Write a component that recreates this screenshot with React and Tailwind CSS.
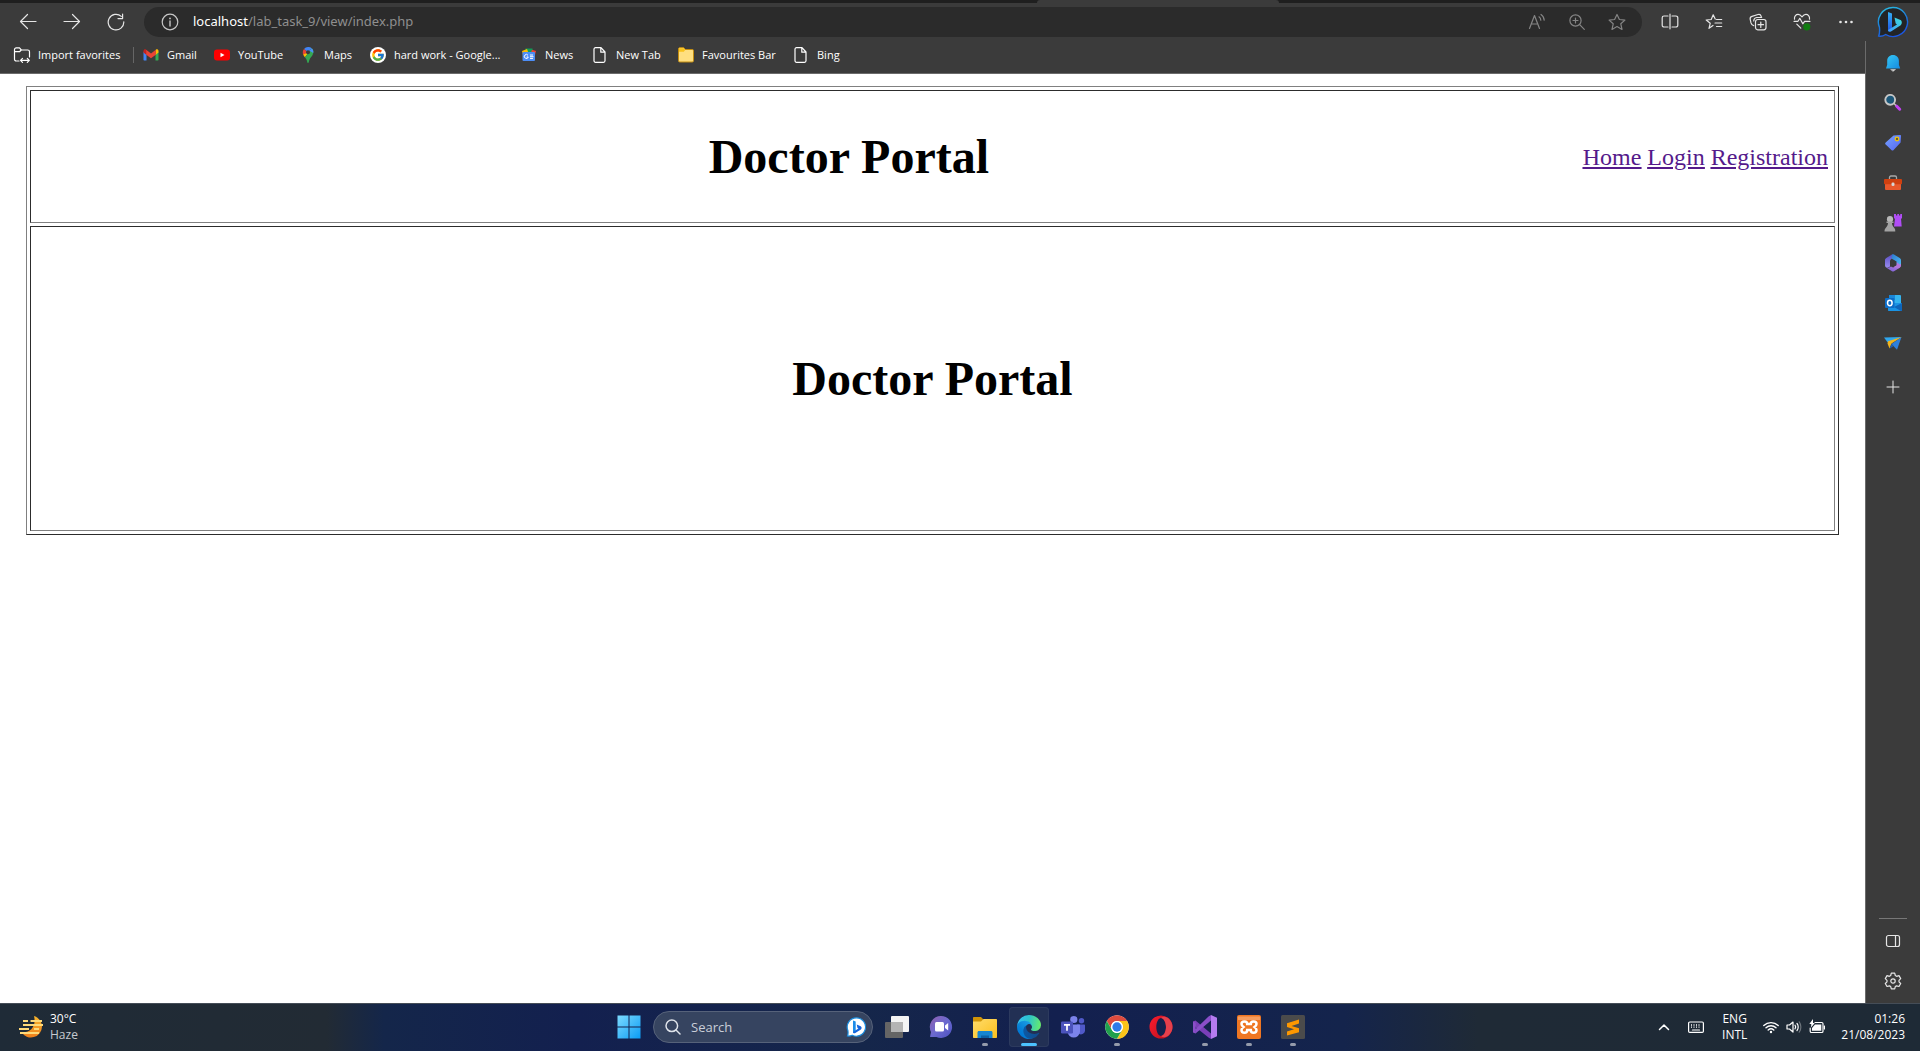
import React from "react";
import { FcGoogle } from "react-icons/fc";

function Icon({ size = 18, box = "0 0 18 18", className = "", width, children }) {
  return (
    <svg
      width={width || size}
      height={size}
      viewBox={box}
      fill="none"
      stroke="currentColor"
      strokeWidth="1.2"
      strokeLinecap="round"
      strokeLinejoin="round"
      className={"shrink-0 " + className}
      aria-hidden="true"
    >
      {children}
    </svg>
  );
}

/* ---------- toolbar icons ---------- */
const ArrowLeft = () => (
  <Icon><path d="M17 8.5H1.5M8.5 1.5l-7 7 7 7" /></Icon>
);
const ArrowRight = () => (
  <Icon><path d="M1 8.5h15.5M9.5 1.5l7 7-7 7" /></Icon>
);
const Reload = () => (
  <Icon><path d="M16.8 8.8A7.8 7.8 0 1 1 14.3 3.4M15.6 1v4.6H11" /></Icon>
);
const InfoIcon = () => (
  <Icon>
    <circle cx="9" cy="9" r="7.8" />
    <path d="M9 8v5" strokeWidth="1.4" />
    <circle cx="9" cy="5.4" r="0.9" fill="currentColor" stroke="none" />
  </Icon>
);
const ReadAloud = () => (
  <Icon><path d="M1.500 15.500 6.500 2.500l5 13M3.300 11h6.500M11 3.800c1.200.8 1.800 2 1.800 3.400M13 1.500c2 1.300 3 3.200 3.200 5.600" /></Icon>
);
const ZoomPlus = () => (
  <Icon><circle cx="7.5" cy="7.5" r="5.6" /><path d="m11.7 11.7 4.6 4.6M7.5 5v5M5 7.5h5" /></Icon>
);
const StarIcon = () => (
  <Icon><path d="m9 1.500 2.400 5 5.500.6-4.100 3.700 1.200 5.600L9 13.600l-5 2.800 1.200-5.600L1.100 7.100l5.500-.6z" /></Icon>
);
const Split = () => (
  <Icon><path d="M7 3H3a1.800 1.800 0 0 0-1.800 1.800v7.400A1.800 1.800 0 0 0 3 14h4M11 3h4a1.800 1.800 0 0 1 1.800 1.800v7.400A1.800 1.800 0 0 1 15 14h-4M9 1.200v14.600" /></Icon>
);
const FavList = () => (
  <Icon><path d="M8 12.500 4 15.300l1.200-5L1.200 7l5-.5L8.200 1.800l2 4.300M11.500 6.500h5.200M10 10h6.700M11.500 13.500h5.200" /></Icon>
);
const Collections = () => (
  <Icon>
    <rect x="6.500" y="6.500" width="10.500" height="10.300" rx="2.200" />
    <path d="M11.800 9v5.400M9 11.700h5.500M4.700 12.600C3 12.300 2.400 11.400 2 9.900L1.200 6.300c-.3-1.500.4-2.600 1.800-3l6-1.800c1.500-.4 2.700.3 3.100 1.700l.2.8M4.700 8c.1-2 1-3.300 3-3.500h5" />
  </Icon>
);
const Heart = () => (
  <Icon>
    <path d="M1.500 6.200C1 3 3.200 1.300 5.200 1.400 7 1.500 8 2.600 9 3.800c1-1.200 2-2.300 3.800-2.400 2-.1 4.200 1.600 3.700 4.800M3.800 11.200l4 4M1 8.300h4l1.800-3 3 5.500 1.800-2.500H17" />
    <circle cx="13.800" cy="13.800" r="3.600" fill="#107c10" stroke="none" />
  </Icon>
);
const Dots = () => (
  <Icon>
    <g fill="currentColor" stroke="none">
      <circle cx="3.500" cy="9" r="1.300" /><circle cx="9" cy="9" r="1.300" /><circle cx="14.500" cy="9" r="1.300" />
    </g>
  </Icon>
);
const BingBubble = () => (
  <svg width="32" height="32" viewBox="0 0 32 32" aria-hidden="true">
    <defs>
      <linearGradient id="bubble" x1="0" y1="0" x2="0.400" y2="1">
        <stop offset="0" stopColor="#2cc5e6" /><stop offset="0.600" stopColor="#1b78d8" /><stop offset="1" stopColor="#1b56e0" />
      </linearGradient>
      <linearGradient id="bingStem" x1="0" y1="0" x2="0" y2="1">
        <stop offset="0" stopColor="#34aef2" /><stop offset="1" stopColor="#1f55e6" />
      </linearGradient>
      <linearGradient id="bingBowl" x1="1" y1="0" x2="0" y2="1">
        <stop offset="0" stopColor="#3de0d8" /><stop offset="1" stopColor="#3f96ff" />
      </linearGradient>
    </defs>
    <path d="M16 1.500a14.500 14.500 0 1 1-7.300 27c-2 1.200-5 2-7 1.600C2.500 28 2.800 25 2.500 21.500A14.500 14.500 0 0 1 16 1.500z" fill="#222426" stroke="url(#bubble)" strokeWidth="1.400" />
    <path d="m11 6 4 1.500v14.800L11 25.500z" fill="url(#bingStem)" />
    <path d="m17.500 11.500 6 2.600c1.500.7 2 3.600.2 5.100L14 25.500c-1.500.7-3 .2-3-1.500l9-5.500-1.300-1z" fill="url(#bingBowl)" />
  </svg>
);

/* ---------- bookmark icons ---------- */
const ImportFolder = () => (
  <Icon>
    <path d="M6 15H3.300a1.800 1.800 0 0 1-1.800-1.800V3.600c0-1 .8-1.800 1.800-1.800h3.200L8.300 4h6.400c1 0 1.800.8 1.800 1.800V11M1.500 5.700h5L8.300 4M7.500 14.300h8.500M9.500 12.300l-2 2 2 2M14.300 12.300l2 2-2 2" />
  </Icon>
);
const Gmail = () => (
  <svg width="16" height="16" viewBox="0 0 16 16" aria-hidden="true">
    <path d="M1 13.500h2.500V7L.5 4.500V13z" fill="#4285f4" />
    <path d="M15 13.500h-2.500V7l3-2.500V13z" fill="#34a853" />
    <path d="M12.500 4v4l3-2.500V4c0-1.600-1.700-2.200-2.700-1.300z" fill="#fbbc04" />
    <path d="M.5 4v1.500l3 2.500V4l-.3-1.300C2.200 1.800.5 2.400.5 4z" fill="#c5221f" />
    <path d="M3.200 2.700 8 6.400l4.800-3.700V7.800L8 11.200 3.200 7.800z" fill="#ea4335" />
  </svg>
);
const YouTube = () => (
  <svg width="16" height="16" viewBox="0 0 16 16" aria-hidden="true">
    <rect x="0" y="2.500" width="16" height="11" rx="3" fill="#f00" />
    <path d="m6.500 5.700 4 2.300-4 2.300z" fill="#fff" />
  </svg>
);
const Maps = () => (
  <svg width="16" height="16" viewBox="0 0 16 16" aria-hidden="true">
    <path d="M8 0a5.300 5.300 0 0 0-4 1.900L8 5.400l3.700-4.100A5.300 5.300 0 0 0 8 0z" fill="#4285f4" />
    <path d="M4 1.900c-1.300 1.500-1.600 3.700-.8 5.800L8 5.400z" fill="#ea4335" />
    <path d="M3.200 7.500c.4 1.100 1 1.900 1.700 2.700l5-6z" fill="#fbbc04" />
    <path d="M11.700 1.300C14 3.200 13.700 6.400 12.300 8.500c-1.500 2.200-3 3.200-3.500 6.500-.2 1.200-1.400 1.200-1.600 0-.3-2.100-1.200-3.500-2.300-4.800z" fill="#34a853" />
    <path d="M11.700 1.300c1.500 1.300 1.900 3 1.500 4.700L9.500 3.800z" fill="#4a90f6" />
    <circle cx="8" cy="5.300" r="2" fill="#3b3b3b" />
  </svg>
);
const News = () => (
  <svg width="16" height="16" viewBox="0 0 16 16" aria-hidden="true">
    <path d="M4.500 1.500h7V6h-7z" fill="#0f9d58" />
    <path d="m1 4 5-2 1.500 4L2 8z" fill="#fbbc04" />
    <path d="m15 4-4-1.200L9.500 7 14 8z" fill="#ea4335" />
    <rect x="1.500" y="5" width="12.500" height="9" rx="1" fill="#4c8df6" />
    <path d="M7 8.300a2 2 0 1 0 .3 1.700H5.600M9 8h3M9 9.700h3.500M9 11.400h3" stroke="#fff" strokeWidth="1" fill="none" />
  </svg>
);
const Page = () => (
  <Icon size={16} box="0 0 16 16" className="text-white">
    <path d="M3.500.7H9L13 5v8.800c0 .8-.7 1.500-1.500 1.500h-8c-.8 0-1.500-.7-1.500-1.500V2.200C2 1.400 2.700.7 3.500.7zM8.800.9v4.300h4" />
  </Icon>
);
const YellowFolder = () => (
  <svg width="16" height="16" viewBox="0 0 16 16" aria-hidden="true">
    <path d="M.5 2c0-.8.5-1.300 1.200-1.300h4L7.300 2.500h7c.7 0 1.200.5 1.200 1.200v10c0 .7-.5 1.300-1.200 1.300H1.700C1 15 .5 14.400.5 13.700z" fill="#ffdf80" stroke="#c28c10" />
    <path d="M1 4.700h4.800l1.500-1.900L5.600 1.200H1.900L1 2z" fill="#f8c21c" />
  </svg>
);

/* ---------- sidebar icons ---------- */
const Bell = () => (
  <Icon>
    <defs><linearGradient id="bell" x1="0" y1="0" x2="1" y2="1"><stop stopColor="#35c8f4" /><stop offset="1" stopColor="#158ae2" /></linearGradient></defs>
    <path d="M7 15.500h4.500L9.200 17.300z" fill="#ddd" stroke="#ddd" strokeWidth="0.500" />
    <path d="M9 1C5.500 1 3.200 3.500 3.200 6.700v4L2 14.500h14.200l-1.300-3.800v-4C14.900 3.500 12.500 1 9 1z" fill="url(#bell)" stroke="none" />
  </Icon>
);
const Magnifier = () => (
  <Icon>
    <path d="m12.500 12 3.200 3.200" stroke="#c341f5" strokeWidth="3" />
    <path d="m10 9.500 1.500 1.500" stroke="#bbb" strokeWidth="1.500" />
    <circle cx="6.200" cy="5.800" r="4.900" fill="#1c587a" stroke="#c7c7c7" strokeWidth="1.900" />
  </Icon>
);
const Tag = () => (
  <Icon>
    <defs><linearGradient id="tag" x1="0" y1="0" x2="1" y2="1"><stop stopColor="#76a4ff" /><stop offset="1" stopColor="#5564f0" /></linearGradient></defs>
    <path d="M9.500 1.500 16 1c.7 0 1 .4 1 1l-.4 6.500-7 7.500c-.7.7-1.500.7-2.200 0L1.700 10.600c-.7-.7-.7-1.500 0-2.200z" fill="url(#tag)" stroke="none" />
    <circle cx="13" cy="5" r="1.800" fill="#675b38" stroke="#f4c500" strokeWidth="1.200" />
  </Icon>
);
const Toolbox = () => (
  <Icon>
    <path d="M5.500 5V3.400c0-.8.6-1.400 1.400-1.400h4.200c.8 0 1.400.6 1.400 1.400V5" stroke="#a9a9a9" strokeWidth="1.300" />
    <rect x="1" y="9" width="16" height="7" rx="1" fill="#e8582c" stroke="none" />
    <rect x="0" y="5" width="18" height="5.200" rx="1" fill="#cf4010" stroke="none" />
    <rect x="7.500" y="8.500" width="3" height="3.500" rx="1.300" fill="#d6d6d6" stroke="none" />
  </Icon>
);
const Chess = () => (
  <Icon>
    <g stroke="none">
      <path d="M10 0h2v1.500h1.300V0h1.700v1.500h1.200V0H18v4.500h-1l.7 8H10L11 4.500h-1z" fill="#b04df5" />
      <circle cx="6" cy="5.200" r="3.100" fill="#b9b9b9" />
      <path d="M2.500 7.500h7v1.600H8c0 2 .8 3.300 2.300 5 .8 1 1 2 1 3.400H.5c0-1.400.3-2.400 1.200-3.400C3.200 12.400 4 11 4 9.100H2.500z" fill="#a3a3a3" />
    </g>
  </Icon>
);
const M365 = () => (
  <Icon>
    <defs>
      <linearGradient id="m1" x1="0" y1="0" x2="0" y2="1"><stop stopColor="#5a4fc4" /><stop offset="1" stopColor="#9a8cf0" /></linearGradient>
      <linearGradient id="m2" x1="0" y1="0" x2="1" y2="1"><stop stopColor="#2c7ad0" /><stop offset="1" stopColor="#4fbcf5" /></linearGradient>
      <linearGradient id="m3" x1="0" y1="1" x2="1" y2="0"><stop stopColor="#7560d6" /><stop offset="1" stopColor="#c07ee0" /></linearGradient>
    </defs>
    <g stroke="none">
      <path d="M8 .5 2.300 3.900C1.500 4.400 1 5.200 1 6.100v5.500c0 1.600 1.500 2.600 3 1.900l2-1V7c0-.9.4-1.600 1.200-2.100L10 3z" fill="url(#m1)" />
      <path d="M8 .5c.7-.4 1.300-.4 2 0l5.700 3.400c.8.500 1.300 1.300 1.300 2.200v5.400L12.500 11V7.500L7.500 4.500z" fill="url(#m2)" />
      <path d="M17 10v1.600c0 .9-.5 1.700-1.300 2.200L10 17.300c-.7.400-1.300.4-2 0l-5.500-3.500c1.800.3 3-.5 4.500-1.300l2 1z" fill="url(#m3)" />
      <path d="m12.500 8 4.500 3.400-2 2.800-5.500-1.200 3-2z" fill="#b277dc" />
      <path d="M9.200 5.900 12.300 7.700v3.600L9.200 13 6.100 11.300V7.700z" fill="#3b3b3b" />
    </g>
  </Icon>
);
const Outlook = () => (
  <Icon>
    <g stroke="none">
      <rect x="5" y="1" width="12" height="10" rx="1" fill="#35b4ee" />
      <path d="M5 1h6v5H5z" fill="#1a86d8" />
      <path d="M4 9h14v7c0 .6-.4 1-1 1H5c-.6 0-1-.4-1-1z" fill="#1a93e4" />
      <path d="m18 9-8 4 7 4c.6 0 1-.4 1-1z" fill="#0e65ba" />
      <rect x="1" y="4" width="9.500" height="10" rx="1" fill="#0c6cc6" />
    </g>
    <ellipse cx="5.800" cy="9" rx="2.300" ry="2.700" stroke="#fff" strokeWidth="1.500" />
  </Icon>
);
const Plane = () => (
  <Icon>
    <g stroke="none">
      <path d="M0 3.500 17.500 3 7 8.500 3.500 8.300z" fill="#2fa7ee" />
      <path d="M17.500 3 7.500 10l5.500 5.800z" fill="#2f80dc" />
      <path d="M17.500 3 4 7.300 3.500 9.500 5.500 14.500l2-5z" fill="#f2b51d" />
      <path d="m7.500 9.700-2 5.100 4-2.600z" fill="#2560b0" />
    </g>
  </Icon>
);
const Plus = () => <Icon size={14} box="0 0 14 14"><path d="M7 1v12M1 7h12" strokeWidth="1" /></Icon>;
const PanelIcon = () => <Icon size={16} box="0 0 16 16"><rect x="1.500" y="2.500" width="13" height="11" rx="2" /><path d="M10.500 2.500v11" /></Icon>;
const Gear = () => (
  <Icon>
    <path d="M7.300 1.200h3.400l.6 2.300 1.300.8 2.400-.7 1.700 3-1.700 1.700v1.500l1.700 1.700-1.700 3-2.400-.7-1.300.8-.6 2.300H7.300l-.6-2.300-1.300-.8-2.400.7-1.700-3L3 9.800V8.300L1.300 6.600l1.700-3 2.400.7 1.300-.8z" />
    <circle cx="9" cy="9" r="2.200" />
  </Icon>
);

/* ---------- taskbar icons ---------- */
const Weather = () => (
  <svg width="24" height="24" viewBox="0 0 24 24" aria-hidden="true">
    <defs><linearGradient id="moon" x1="0" y1="0" x2="0" y2="1"><stop stopColor="#f8b62d" /><stop offset="1" stopColor="#f07f1b" /></linearGradient></defs>
    <path d="M15 1a11 11 0 0 1 8 10.500A11 11 0 0 1 2.500 17C9 19 18 13 15 1z" fill="url(#moon)" />
    <path d="M4 6h5M11.500 6H23M4 10h20M0 14h10M15 14h5M1 18h19" stroke="#ffd978" strokeWidth="2" />
  </svg>
);
const WindowsLogo = () => (
  <svg width="24" height="24" viewBox="0 0 24 24" aria-hidden="true">
    <defs><linearGradient id="win" gradientUnits="userSpaceOnUse" x1="0" y1="0" x2="24" y2="24"><stop stopColor="#7fdcff" /><stop offset="1" stopColor="#089bf5" /></linearGradient></defs>
    <path d="M.5.5h11v11H.5zM12.500.5h11v11h-11zM.5 12.500h11v11H.5zM12.500 12.500h11v11h-11z" fill="url(#win)" />
  </svg>
);
const BingSmall = () => (
  <svg width="20" height="20" viewBox="0 0 20 20" aria-hidden="true">
    <path d="M10.500.8a9.200 9.200 0 1 1-4.300 17.400c-1.500.7-3.200 1-4.700.8.600-1.600.7-3.500.4-5.500A9.200 9.200 0 0 1 10.500.8z" fill="#fff" stroke="#1a8bdc" strokeWidth="1.200" />
    <path d="m7 3.500 2.700 1v9.500L7 16z" fill="#1d8ce8" />
    <path d="m10.700 7.500 4 1.800c1.200.7 1.200 2.500.2 3.300l-5.600 3.500C8 16.700 7 16 7 15l5.500-3.500-1-.5z" fill="#1464dd" />
  </svg>
);
const TaskView = () => (
  <svg width="24" height="24" viewBox="0 0 24 24" aria-hidden="true">
    <rect x="6" y="1" width="18" height="16" rx="1" fill="#f4f4f4" />
    <rect x="0" y="7" width="18" height="16" rx="1" fill="#656565" />
    <path d="M6 7h12v10H6z" fill="#b4b4b4" />
  </svg>
);
const Chat = () => (
  <svg width="24" height="24" viewBox="0 0 24 24" aria-hidden="true">
    <defs><linearGradient id="chat" x1="0" y1="0" x2="1" y2="1"><stop stopColor="#8f5fae" /><stop offset="0.500" stopColor="#6b6ad0" /><stop offset="1" stopColor="#4b50c0" /></linearGradient></defs>
    <path d="M12 1a11 11 0 1 1-4.500 21H1.500c-.5 0-.6-.5-.3-1L2 17A11 11 0 0 1 12 1z" fill="url(#chat)" />
    <rect x="6" y="7" width="9" height="9.500" rx="1.500" fill="#fff" /><path d="m16 10.500 3.200-2.500v7.500L16 13z" fill="#fff" />
  </svg>
);
const Explorer = () => (
  <svg width="24" height="24" viewBox="0 0 24 24" aria-hidden="true">
    <defs><linearGradient id="fold" x1="0" y1="0" x2="1" y2="1"><stop stopColor="#ffdc6b" /><stop offset="1" stopColor="#fbbf1c" /></linearGradient></defs>
    <path d="M0 3c0-.6.500-1 1-1h7l2 2v4H0z" fill="#d09408" />
    <path d="M0 6.500h8L10.500 4H23c.6 0 1 .4 1 1v17c0 .6-.4 1-1 1H1c-.6 0-1-.4-1-1z" fill="url(#fold)" />
    <path d="M4.500 23v-5.500c0-.8.600-1.500 1.400-1.500h12.200c.8 0 1.400.7 1.400 1.500V23z" fill="#1685d1" /><path d="M8 23v-2.500h8V23z" fill="#0c60a5" />
  </svg>
);
const Edge = () => (
  <svg width="24" height="24" viewBox="0 0 256 256" aria-hidden="true">
    <defs>
      <linearGradient id="e1" gradientUnits="userSpaceOnUse" x1="63" y1="178" x2="241" y2="178"><stop stopColor="#0c59a4" /><stop offset="1" stopColor="#114a8b" /></linearGradient>
      <linearGradient id="e2" gradientUnits="userSpaceOnUse" x1="157" y1="100" x2="46" y2="222"><stop stopColor="#1b9de2" /><stop offset="0.670" stopColor="#0680d7" /><stop offset="1" stopColor="#0078d4" /></linearGradient>
      <linearGradient id="e3" gradientUnits="userSpaceOnUse" x1="10" y1="60" x2="250" y2="110"><stop stopColor="#35c1f1" /><stop offset="0.450" stopColor="#2cc3cb" /><stop offset="1" stopColor="#66eb6e" /></linearGradient>
    </defs>
    <path fill="url(#e1)" d="M231 190.500c-3.400 1.800-6.900 3.400-10.500 4.700a101.500 101.500 0 0 1-35.900 6.500c-47.300 0-88.500-32.500-88.500-74.300a31.500 31.500 0 0 1 16.400-27.300c-42.800 1.800-53.800 46.400-53.800 72.500 0 74 68.100 81.400 82.800 81.400 7.900 0 19.800-2.300 27-4.600l1.300-.4a128.300 128.300 0 0 0 66.600-52.800 4 4 0 0 0-5.400-5.700z" />
    <path fill="url(#e2)" d="M105.700 241.400a79.200 79.200 0 0 1-22.700-21.300 80.700 80.700 0 0 1 29.500-120c3.200-1.500 8.500-4.100 15.600-4a32.400 32.400 0 0 1 25.700 13 31.900 31.900 0 0 1 6.300 18.700c0-.2 24.500-79.600-80-79.600-43.900 0-80 41.600-80 78.200a130.200 130.200 0 0 0 12.100 56 128 128 0 0 0 156.400 67 75.500 75.500 0 0 1-62.800-8z" />
    <path fill="url(#e3)" d="M152.300 148.900c-.9 1-3.400 2.500-3.400 5.600 0 2.600 1.700 5.200 4.800 7.300 14.300 10 41.400 8.600 41.500 8.600a59.600 59.600 0 0 0 30.300-8.300 61.400 61.400 0 0 0 30.400-52.900c.3-22.400-8-37.300-11.300-43.900C223.500 23.900 177.700 0 128 0A128 128 0 0 0 0 126.200c.5-36.500 36.800-66 80-66 3.500 0 23.500.3 42 10a72.600 72.600 0 0 1 30.900 29.300c6.100 10.600 7.200 24.100 7.200 29.500 0 5.400-2.700 13.400-7.800 20z" />
  </svg>
);
const Teams = () => (
  <svg width="24" height="24" viewBox="0 0 24 24" aria-hidden="true">
    <circle cx="20.500" cy="5.700" r="2.700" fill="#5059c9" /><path d="M16 9.500h7c.6 0 1 .4 1 1V15a4 4 0 0 1-7 3z" fill="#5059c9" />
    <circle cx="12.800" cy="4.500" r="3.600" fill="#7b83eb" /><path d="M7 9.500h11c.6 0 1 .4 1 1v6.500a6.300 6.300 0 0 1-12.500 0z" fill="#7b83eb" />
    <rect x="0" y="6.500" width="12" height="12" rx="1.200" fill="#4b53bc" />
    <path d="M3 9.800h6M6 9.800v6" stroke="#fff" strokeWidth="1.700" />
  </svg>
);
const Chrome = () => (
  <svg width="24" height="24" viewBox="0 0 48 48" aria-hidden="true">
    <circle cx="24" cy="24" r="23.500" fill="#fff" />
    <path d="M3.700 12.200A23.500 23.500 0 0 1 44.400 12.200H24A11.800 11.800 0 0 0 13.800 30z" fill="#dd4b3e" />
    <path d="M44.400 12.200A23.500 23.500 0 0 1 24 47.500L34.200 30A11.800 11.800 0 0 0 24 12.200z" fill="#fcc419" />
    <path d="M24 47.500A23.500 23.500 0 0 1 3.700 12.200L13.800 30a11.800 11.800 0 0 0 20.400 0z" fill="#21a04d" />
    <circle cx="24" cy="24" r="11.800" fill="#fff" /><circle cx="24" cy="24" r="9.300" fill="#2f7be9" />
  </svg>
);
const Opera = () => (
  <svg width="24" height="24" viewBox="0 0 24 24" aria-hidden="true">
    <defs><linearGradient id="opera" x1="0" y1="0" x2="1" y2="0.600"><stop stopColor="#ff1b2d" /><stop offset="1" stopColor="#b8121f" /></linearGradient></defs>
    <path fillRule="evenodd" d="M12 .5a11.500 11.500 0 1 1 0 23 11.500 11.500 0 0 1 0-23zM12 3C9.500 3 7.300 7 7.300 12S9.500 21 12 21s5-4 5-9-2.500-9-5-9z" fill="url(#opera)" />
    <path d="M12 3c2-2 6-1.500 8.500 1.500 4 4 4 11 0 15C18 22.500 14 23 12 21c2.500 0 5-4 5-9s-2.500-9-5-9z" fill="#e5404c" />
  </svg>
);
const VisualStudio = () => (
  <svg width="24" height="24" viewBox="0 0 24 24" aria-hidden="true">
    <path d="M0 6.500 2.500 5.500 18 18.500V24L15.500 22.500 3 12.500 0 8z" fill="#7a3fb8" />
    <path d="M0 17.500V6.500L2.700 8v8.300l-.2 2.200zM2.500 18.500 18 5.500V0L15.500 1.500 2.700 14z" fill="#8a4fc9" />
    <path d="M18 0 24 2.800v18.400L18 24z" fill="#b57cf0" />
  </svg>
);
const Xampp = () => (
  <svg width="24" height="24" viewBox="0 0 24 24" aria-hidden="true">
    <rect width="24" height="24" rx="2" fill="#ef7622" /><path d="M1 1.500h22V5H1z" fill="#f69d5e" />
    <path d="M7.500 6.500c-2 0-3 1-3 2.500 0 1.300.7 2 2 3-1.300 1-2 1.700-2 3 0 1.600 1 2.800 3 2.800s2.700-1 2.700-2.800h3.600c0 1.800.7 2.800 2.700 2.800s3-1.200 3-2.800c0-1.300-.7-2-2-3 1.300-1 2-1.700 2-3 0-1.500-1-2.500-3-2.500s-2.700 1-2.700 2.500h-3.600c0-1.500-.7-2.500-2.700-2.500z" fill="none" stroke="#fff" strokeWidth="2.500" />
  </svg>
);
const Sublime = () => (
  <svg width="24" height="24" viewBox="0 0 24 24" aria-hidden="true">
    <rect width="24" height="24" rx="1.500" fill="#4b4b4b" />
    <path d="M6 8.200 18 4.500v4L10.500 11 18 13.200v4L6 20.500v-4l7-2.300-7-2.200z" fill="#ff9800" />
  </svg>
);
const Chevron = () => <Icon size={12} box="0 0 12 12"><path d="m1.500 8.500 4.500-4.500 4.500 4.500" strokeWidth="1.500" /></Icon>;
const Keyboard = () => (
  <Icon size={16} box="0 0 16 16"><rect x="0.600" y="3" width="14.800" height="10.400" rx="1.200" /><path d="M3 6h10M3 8.200h10" strokeDasharray="1 1.500" strokeWidth="1.300" strokeLinecap="butt" /><path d="M4.500 11h7" /></Icon>
);
const Wifi = () => (
  <Icon size={16} box="0 0 16 16"><path d="M.8 6.500a10.500 10.500 0 0 1 14.400 0M3 8.800a7.300 7.300 0 0 1 10 0M5.200 11a4.200 4.200 0 0 1 5.600 0" strokeWidth="1.400" /><circle cx="8" cy="13" r="1.200" fill="currentColor" stroke="none" /></Icon>
);
const Volume = () => (
  <Icon size={16} box="0 0 16 16"><path d="M1 6v4h2.500L7 13V3L3.500 6zM9 6.200c.8 1 .8 2.600 0 3.600M11 4.500c1.600 1.800 1.600 5.200 0 7" /><path d="M13.200 2.800c2.200 2.800 2.200 7.600 0 10.400" opacity="0.350" /></Icon>
);
const Battery = () => (
  <Icon size={16} box="0 0 16 16"><path d="M6 3.500h6.700c.7 0 1.300.6 1.300 1.300v7.400c0 .7-.6 1.300-1.300 1.300H2.500c-.7 0-1.300-.6-1.300-1.300V9M15.500 7v3" /><path d="M6 5.500h6.300v6.300H3V9z" fill="currentColor" stroke="none" /><path d="M4 0 .3 5h2L2 8.500 5.800 4H4z" fill="currentColor" stroke="none" /></Icon>
);

/* ---------- data ---------- */
const bookmarks = [
  { label: "Gmail", icon: <Gmail />, width: "w-[71px]" },
  { label: "YouTube", icon: <YouTube />, width: "w-[86px]" },
  { label: "Maps", icon: <Maps />, width: "w-[70px]" },
  { label: "hard work - Google...", icon: <span className="rounded-full bg-white p-px"><FcGoogle size={14} /></span>, width: "w-[151px]" },
  { label: "News", icon: <News />, width: "w-[71px]" },
  { label: "New Tab", icon: <Page />, width: "w-[86px]" },
  { label: "Favourites Bar", icon: <YellowFolder />, width: "w-[115px]" },
  { label: "Bing", icon: <Page />, width: "w-[60px]" },
];
const toolbarEnd = [
  ["Split screen", Split], ["Favorites", FavList], ["Collections", Collections], ["Browser essentials", Heart], ["Settings and more", Dots],
];
const sideTools = [
  ["Notifications", Bell], ["Search", Magnifier], ["Shopping", Tag], ["Tools", Toolbox],
  ["Games", Chess], ["Microsoft 365", M365], ["Outlook", Outlook], ["Drop", Plane],
];
const apps = [
  ["Task view", TaskView], ["Chat", Chat], ["File Explorer", Explorer, "open"], ["Microsoft Edge", Edge, "active"], ["Teams", Teams],
  ["Chrome", Chrome, "open"], ["Opera", Opera], ["Visual Studio", VisualStudio, "open"], ["XAMPP", Xampp, "open"], ["Sublime Text", Sublime, "open"],
];

function ToolButton({ label, children, className = "w-11" }) {
  return (
    <button type="button" aria-label={label} className={"flex h-[30px] shrink-0 items-center justify-center " + className}>
      {children}
    </button>
  );
}

function Toolbar() {
  return (
    <header className="flex h-[38px] items-center pl-1.5 text-[#e6e6e6]">
      <ToolButton label="Back"><ArrowLeft /></ToolButton>
      <ToolButton label="Forward"><ArrowRight /></ToolButton>
      <ToolButton label="Refresh"><Reload /></ToolButton>
      <div className="ml-1.5 flex h-[30px] min-w-0 flex-1 items-center rounded-full bg-[#2b2b2b] pr-[5px] pl-[17px] font-['Noto_Sans',sans-serif] text-[13px]">
        <button type="button" aria-label="View site information" className="text-[#c8c8c8]"><InfoIcon /></button>
        <a href="#address" className="ml-3.5 flex-1 text-[#8f8f8f]"><span className="text-white">localhost</span>/lab_task_9/view/index.php</a>
        <div className="flex text-[#858585]">
          <ToolButton label="Read aloud" className="w-10"><ReadAloud /></ToolButton>
          <ToolButton label="Zoom" className="w-10"><ZoomPlus /></ToolButton>
          <ToolButton label="Add to favorites" className="w-10"><StarIcon /></ToolButton>
        </div>
      </div>
      <div className="ml-1.5 flex">
        {toolbarEnd.map(([label, Glyph]) => <ToolButton key={label} label={label}><Glyph /></ToolButton>)}
      </div>
      <button type="button" aria-label="Bing chat" className="mr-[11px] ml-[9px] shrink-0"><BingBubble /></button>
    </header>
  );
}

function FavoritesBar() {
  return (
    <nav className="flex h-[33px] items-start border-b border-[#6b6b6b] pt-1.5 pl-[13px] font-['Open_Sans',sans-serif] text-[11px] text-white">
      <button type="button" className="flex h-4 w-[121px] items-center gap-[7px] border-r border-[#666] whitespace-nowrap">
        <ImportFolder />Import favorites
      </button>
      <div className="ml-[9px] flex">
        {bookmarks.map((b) => (
          <a key={b.label} href="#bookmark" className={"flex h-4 shrink-0 items-center gap-2 whitespace-nowrap " + b.width}>
            {b.icon}{b.label}
          </a>
        ))}
      </div>
    </nav>
  );
}

function PortalPage() {
  const cell = "border border-t-[#2c2c2c] border-l-[#2c2c2c] border-r-[#808080] border-b-[#808080] px-1.5";
  return (
    <main className="flex-1 bg-white px-[26px] pt-3 font-['Liberation_Serif',serif] text-2xl text-black">
      <table className="w-full border-separate border-spacing-[3px] border border-t-[#808080] border-l-[#808080] border-r-[#2c2c2c] border-b-[#2c2c2c]">
        <tbody>
          <tr>
            <td className={"h-[133px] " + cell}>
              <div className="flex items-center">
                <h1 className="flex-1 pl-[78px] text-center text-5xl font-bold">Doctor Portal</h1>
                <div className="flex gap-1.5 text-[#551a8b] underline">
                  <a href="#home">Home</a>
                  <a href="#login">Login</a>
                  <a href="#registration">Registration</a>
                </div>
              </div>
            </td>
          </tr>
          <tr>
            <td className={"h-[305px] " + cell}>
              <h2 className="text-center text-5xl font-bold">Doctor Portal</h2>
            </td>
          </tr>
        </tbody>
      </table>
    </main>
  );
}

function Sidebar() {
  return (
    <aside className="flex w-[55px] shrink-0 flex-col items-center border-l border-[#6b6b6b] pt-0.5 text-[#e6e6e6]">
      {sideTools.map(([label, Glyph]) => (
        <button type="button" key={label} aria-label={label} className="flex h-10 w-10 items-center justify-center"><Glyph /></button>
      ))}
      <button type="button" aria-label="Customize" className="mt-1 flex h-10 w-10 items-center justify-center"><Plus /></button>
      <div className="mt-auto mb-0.5 h-px w-7 bg-[#777]" />
      <button type="button" aria-label="Hide sidebar" className="flex h-10 w-10 items-center justify-center"><PanelIcon /></button>
      <button type="button" aria-label="Settings" className="mb-0.5 flex h-10 w-10 items-center justify-center"><Gear /></button>
    </aside>
  );
}

function Taskbar() {
  return (
    <footer className="grid h-12 grid-cols-[1fr_auto_1fr] items-center border-t border-[#454d57] bg-[linear-gradient(90deg,#1f2b37_0%,#222b34_17%,#14264a_20%,#13204f_30%,#15264a_45%,#13204f_55%,#14244c_70%,#1f2a36_77%,#1e2a36_100%)] pb-px font-['Open_Sans',sans-serif] text-xs leading-4 text-white">
      <button type="button" className="ml-[19px] flex items-center gap-[7px] justify-self-start text-left">
        <Weather />
        <span>30°C<br /><span className="text-[#c5cad0]">Haze</span></span>
      </button>
      <div className="flex h-full items-center">
        <button type="button" aria-label="Start" className="flex w-12 justify-center"><WindowsLogo /></button>
        <label className="flex h-8 w-[220px] items-center rounded-full border border-[#56627a] bg-[#364460] px-1.5">
          <Icon size={16} box="0 0 16 16" className="ml-[5px] text-[#dfe3ea]"><circle cx="6.800" cy="6.800" r="5.800" strokeWidth="1.500" /><path d="m11 11 4 4" strokeWidth="1.500" /></Icon>
          <input type="search" placeholder="Search" aria-label="Search" className="ml-2.5 min-w-0 flex-1 bg-transparent text-[13px] placeholder:text-[#c9ced8]" />
          <BingSmall />
        </label>
        <div className="ml-0.5 flex h-full items-center">
          {apps.map(([label, Glyph, state]) => (
            <button
              type="button"
              key={label}
              aria-label={label}
              className={"relative mx-0.5 flex h-10 w-10 items-center justify-center rounded " + (state === "active" ? "bg-[#223054] ring-1 ring-[#2c3a5e] ring-inset" : "")}
            >
              <Glyph />
              {state && <span className={"absolute bottom-px h-[3px] rounded-full " + (state === "active" ? "w-4 bg-[#4cc2ff]" : "w-1.5 bg-[#959bab]")} />}
            </button>
          ))}
        </div>
      </div>
      <div className="mr-[15px] flex items-center justify-self-end">
        <button type="button" aria-label="Show hidden icons"><Chevron /></button>
        <button type="button" aria-label="Touch keyboard" className="ml-[18px]"><Keyboard /></button>
        <button type="button" className="ml-[18px] text-center">ENG<br />INTL</button>
        <button type="button" aria-label="Network, volume and battery" className="ml-4 flex gap-[7px]"><Wifi /><Volume /><Battery /></button>
        <button type="button" className="ml-4 text-right">01:26<br />21/08/2023</button>
      </div>
    </footer>
  );
}

export default function App() {
  return (
    <div className="flex min-h-screen flex-col bg-[#3b3b3b]">
      <div className="flex h-[3px] bg-[#1f1f1f]">
        <div className="ml-[54%] w-[242px] rounded-t-sm bg-[#3b3b3b]" />
      </div>
      <Toolbar />
      <div className="flex flex-1">
        <div className="flex min-w-0 flex-1 flex-col">
          <FavoritesBar />
          <PortalPage />
        </div>
        <Sidebar />
      </div>
      <Taskbar />
    </div>
  );
}
